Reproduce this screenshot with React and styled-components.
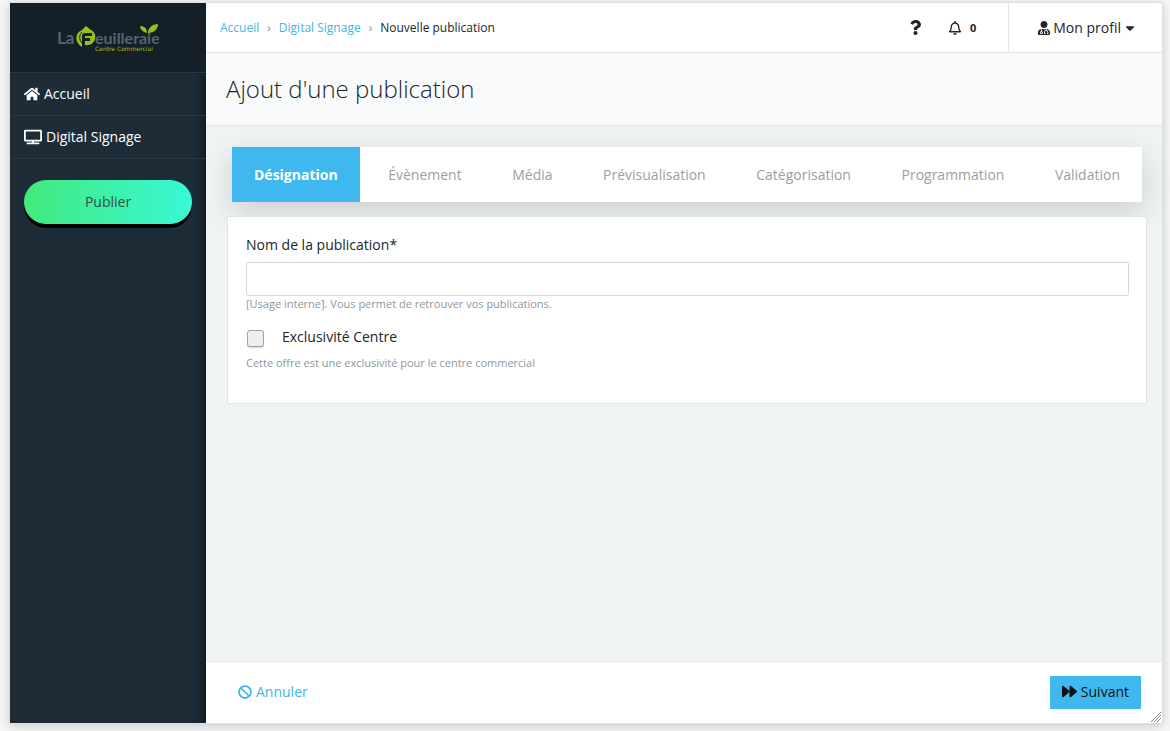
import React from "react";
import styled, { createGlobalStyle } from "styled-components";
import {
  FaBan,
  FaCaretDown,
  FaForward,
  FaHome,
  FaQuestion,
  FaRegBell,
  FaTv,
  FaUserMd,
} from "react-icons/fa";

const GlobalStyle = createGlobalStyle`
  * {
    box-sizing: border-box;
  }
  body {
    margin: 0;
    background: #f5f5f5;
    color: #212529;
    font-family: "Open Sans", sans-serif;
    font-size: 14px;
    line-height: 20px;
  }
  button,
  input {
    font: inherit;
  }
  a {
    text-decoration: none;
  }
`;

const Window = styled.div`
  position: relative;
  display: flex;
  min-height: calc(100vh - 11px);
  margin: 3px 8px 8px 10px;
  background: #eff3f4;
  box-shadow: 0 0 0 1px #dee0e2, 0 2px 10px rgba(0, 0, 0, 0.2);
`;

const Sidebar = styled.aside`
  display: flex;
  flex-direction: column;
  flex: 0 0 196px;
  background: #1e2c37;
`;

const Brand = styled.a`
  display: flex;
  justify-content: center;
  align-items: center;
  height: 69px;
  background: #151f27;
`;

const Menu = styled.nav`
  flex: 1;
  box-shadow: inset -8px 0 8px -4px #11191f;
`;

const MenuLink = styled.a`
  display: flex;
  align-items: center;
  gap: 4px;
  height: 43px;
  padding: 0 14px;
  border-top: 1px solid #283945;
  color: #fff;
  &:last-of-type {
    height: 44px;
    border-bottom: 1px solid #283945;
  }
`;

const PublishButton = styled.button`
  display: block;
  width: calc(100% - 28px);
  height: 44px;
  margin: 21px 14px;
  border: 0;
  border-radius: 22px;
  background: linear-gradient(90deg, #43e97b 0%, #38f9d7 100%);
  box-shadow: 0 4px 0 #000;
  color: #354d48;
`;

const Main = styled.main`
  display: flex;
  flex-direction: column;
  flex: 1;
  min-width: 0;
`;

const TopBar = styled.header`
  display: flex;
  align-items: center;
  height: 50px;
  background: #fff;
  border-bottom: 1px solid #dfe2e4;
`;

const Breadcrumb = styled.nav`
  display: flex;
  gap: 8px;
  flex: 1;
  padding-left: 14px;
  font-size: 12px;
  a {
    color: #3eb5ea;
  }
  i {
    color: #868e96;
    font-style: normal;
  }
`;

const IconButton = styled.button`
  display: flex;
  align-items: center;
  gap: 8px;
  padding: 0;
  margin-right: ${(props) => props.$gap}px;
  border: 0;
  background: none;
  color: #212529;
  strong {
    font-size: 11px;
  }
`;

const ProfileButton = styled(IconButton)`
  align-self: stretch;
  gap: 2px;
  padding: 0 25px 0 28px;
  border-left: 1px solid #dfe8ec;
`;

const TitleBar = styled.div`
  padding: 20px;
  height: 73px;
  background: #f9fafc;
  border-bottom: 1px solid #e6e9eb;
  h1 {
    margin: 0;
    font-size: 24px;
    font-weight: 300;
    line-height: 32px;
  }
`;

const Content = styled.div`
  flex: 1;
  padding: 21px 15px 0 21px;
`;

const Steps = styled.div`
  display: flex;
  justify-content: space-between;
  height: 55px;
  margin: 0 5px;
  background: #fff;
  box-shadow: 0 10px 30px rgba(0, 0, 0, 0.15);
`;

const Step = styled.button`
  padding: 0 22px;
  border: 0;
  background: ${(props) => (props.$active ? "#3eb8ef" : "none")};
  color: ${(props) => (props.$active ? "#fff" : "#9e9e9e")};
  font-weight: ${(props) => (props.$active ? 700 : 400)};
`;

const Card = styled.form`
  position: relative;
  min-height: 188px;
  margin-top: 14px;
  padding: 18px 17px 18px 18px;
  background: #fff;
  border: 1px solid #dee5e7;
  border-radius: 2px;
`;

const Label = styled.label`
  display: block;
`;

const TextInput = styled.input`
  display: block;
  width: 100%;
  height: 34px;
  margin-top: 7px;
  padding: 6px 12px;
  border: 1px solid #cfdadd;
  border-radius: 2px;
`;

const Help = styled.small`
  display: block;
  color: #8f979e;
  font-size: 11px;
  line-height: 16px;
`;

const CheckRow = styled.div`
  display: flex;
  align-items: center;
  gap: 18px;
  margin: 15px 0 8px;
`;

const Checkbox = styled.input`
  appearance: none;
  width: 17px;
  height: 17px;
  margin: 2px 0 0 1px;
  border: 1px solid #9fa1a4;
  border-radius: 3px;
  background: #efeff1;
  box-shadow: 0 1px 1px rgba(0, 0, 0, 0.15);
`;

const Footer = styled.footer`
  display: flex;
  justify-content: space-between;
  align-items: center;
  height: 62px;
  padding: 0 21px 0 32px;
  background: #fff;
  border-top: 1px solid #e5e8e9;
`;

const CancelLink = styled.a`
  display: flex;
  align-items: center;
  gap: 4px;
  padding-bottom: 2px;
  color: #3eb5ea;
`;

const NextButton = styled.button`
  display: flex;
  align-items: center;
  gap: 4px;
  height: 33px;
  padding: 0 12px 2px;
  border: 0;
  border-radius: 1px;
  background: #3eb8ef;
  color: #111;
`;

const Grip = styled.svg`
  position: absolute;
  right: 1px;
  bottom: 1px;
`;

const Logo = () => (
  <svg width="102" height="34" viewBox="0 0 102 34" role="img" aria-label="La Feuilleraie">
    <g fill="#53646f" fontFamily="Lato" fontWeight="700">
      <text x="0" y="23" fontSize="17">La</text>
      <text x="38" y="23" fontSize="16">euilleraie</text>
    </g>
    <path
      d="M25 9L29 5L34 9C38 11 39 15 38 18C37 22 33 25 28 24V20H33V17H28V15H35V12H28Q25 12 25 15V26C18 22 17 12 25 9Z"
      fill="#95c11f"
    />
    <path d="M25 11C22 14 22 19 25 22" fill="none" stroke="#151f27" />
    <path
      d="M90 12C86 11 83 8 83 5C88 5 90 8 90 12ZM91 12C91 7 95 3 101 3C101 8 97 12 91 12Z"
      fill="#95c11f"
    />
    <text x="38" y="30" fill="#95c11f" fontFamily="DejaVu Sans" fontSize="6">
      Centre Commercial
    </text>
  </svg>
);

const steps = [
  "Désignation",
  "Évènement",
  "Média",
  "Prévisualisation",
  "Catégorisation",
  "Programmation",
  "Validation",
];

const App = () => {
  return (
    <>
      <GlobalStyle />
      <Window>
        <Sidebar>
          <Brand href="#">
            <Logo />
          </Brand>
          <Menu>
            <MenuLink href="#">
              <FaHome size={16} />
              Accueil
            </MenuLink>
            <MenuLink href="#">
              <FaTv size={18} />
              Digital Signage
            </MenuLink>
            <PublishButton type="button">Publier</PublishButton>
          </Menu>
        </Sidebar>
        <Main>
          <TopBar>
            <Breadcrumb>
              <a href="#">Accueil</a>
              <i>›</i>
              <a href="#">Digital Signage</a>
              <i>›</i>
              <span>Nouvelle publication</span>
            </Breadcrumb>
            <IconButton type="button" aria-label="Aide" $gap={25}>
              <FaQuestion size={15} />
            </IconButton>
            <IconButton type="button" $gap={32}>
              <FaRegBell size={14} />
              <strong>0</strong>
            </IconButton>
            <ProfileButton type="button" $gap={0}>
              <FaUserMd size={14} />
              Mon profil
              <FaCaretDown size={14} />
            </ProfileButton>
          </TopBar>
          <TitleBar>
            <h1>Ajout d'une publication</h1>
          </TitleBar>
          <Content>
            <Steps>
              {steps.map((step, index) => (
                <Step key={step} type="button" $active={index === 0}>
                  {step}
                </Step>
              ))}
            </Steps>
            <Card>
              <Label htmlFor="name">Nom de la publication*</Label>
              <TextInput id="name" type="text" />
              <Help>[Usage interne]. Vous permet de retrouver vos publications.</Help>
              <CheckRow>
                <Checkbox id="exclusive" type="checkbox" />
                <Label htmlFor="exclusive">Exclusivité Centre</Label>
              </CheckRow>
              <Help>Cette offre est une exclusivité pour le centre commercial</Help>
            </Card>
          </Content>
          <Footer>
            <CancelLink href="#">
              <FaBan size={14} />
              Annuler
            </CancelLink>
            <NextButton type="button">
              <FaForward size={15} />
              Suivant
            </NextButton>
          </Footer>
        </Main>
        <Grip width="10" height="10" viewBox="0 0 10 10" stroke="#888">
          <path d="M0 10L10 0M3 10L10 3M6 10L10 6" />
        </Grip>
      </Window>
    </>
  );
};

export default App;
